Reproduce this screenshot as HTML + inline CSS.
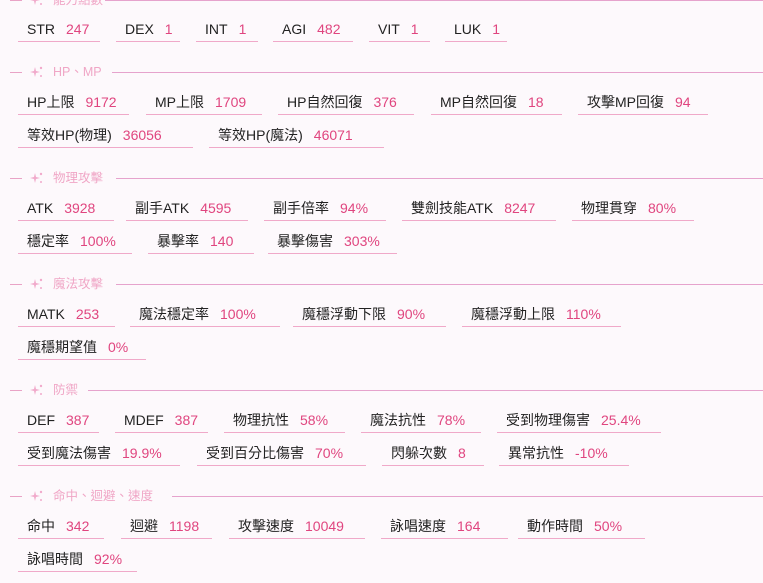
<!DOCTYPE html>
<html><head><meta charset="utf-8"><style>
html,body{margin:0;padding:0;background:#fdf9fc;width:763px;height:583px;overflow:hidden;position:relative;font-family:"Liberation Sans","Noto Sans CJK TC",sans-serif;}
.h{position:absolute;left:0;width:763px;height:16px;}
.h .d{position:absolute;left:10px;top:8px;width:12px;height:1px;background:#e9a3c6;}
.h .s{position:absolute;left:29px;top:0px;width:16px;height:16px;}
.h .t{position:absolute;left:53px;top:0;font-size:12.5px;line-height:16px;color:#f0a6c6;white-space:nowrap;}
.h .l{position:absolute;top:8px;right:0;height:1px;background:#e6a3cd;}
.i{position:absolute;height:24px;border-bottom:1px solid #f0a9c9;font-size:14px;line-height:24px;white-space:nowrap;color:#222;}
.i span.k{margin-left:9px;}
.i span.v{margin-left:11px;color:#e0457f;}
</style></head><body>
<div class="h" style="top:-8px"><div class="d"></div><svg class="s" viewBox="0 0 16 16"><path d="M6 3 L7 7 L11 8 L7 9 L6 13 L5 9 L1 8 L5 7Z" fill="#f1aacb"/><circle cx="12" cy="4" r="1.2" fill="#f1aacb"/><circle cx="12" cy="12" r="1" fill="#f1aacb"/></svg><div class="t">能力點數</div><div class="l" style="left:105px"></div></div>
<div class="h" style="top:64px"><div class="d"></div><svg class="s" viewBox="0 0 16 16"><path d="M6 3 L7 7 L11 8 L7 9 L6 13 L5 9 L1 8 L5 7Z" fill="#f1aacb"/><circle cx="12" cy="4" r="1.2" fill="#f1aacb"/><circle cx="12" cy="12" r="1" fill="#f1aacb"/></svg><div class="t">HP、MP</div><div class="l" style="left:112px"></div></div>
<div class="h" style="top:170px"><div class="d"></div><svg class="s" viewBox="0 0 16 16"><path d="M6 3 L7 7 L11 8 L7 9 L6 13 L5 9 L1 8 L5 7Z" fill="#f1aacb"/><circle cx="12" cy="4" r="1.2" fill="#f1aacb"/><circle cx="12" cy="12" r="1" fill="#f1aacb"/></svg><div class="t">物理攻擊</div><div class="l" style="left:116px"></div></div>
<div class="h" style="top:276px"><div class="d"></div><svg class="s" viewBox="0 0 16 16"><path d="M6 3 L7 7 L11 8 L7 9 L6 13 L5 9 L1 8 L5 7Z" fill="#f1aacb"/><circle cx="12" cy="4" r="1.2" fill="#f1aacb"/><circle cx="12" cy="12" r="1" fill="#f1aacb"/></svg><div class="t">魔法攻擊</div><div class="l" style="left:116px"></div></div>
<div class="h" style="top:382px"><div class="d"></div><svg class="s" viewBox="0 0 16 16"><path d="M6 3 L7 7 L11 8 L7 9 L6 13 L5 9 L1 8 L5 7Z" fill="#f1aacb"/><circle cx="12" cy="4" r="1.2" fill="#f1aacb"/><circle cx="12" cy="12" r="1" fill="#f1aacb"/></svg><div class="t">防禦</div><div class="l" style="left:88px"></div></div>
<div class="h" style="top:488px"><div class="d"></div><svg class="s" viewBox="0 0 16 16"><path d="M6 3 L7 7 L11 8 L7 9 L6 13 L5 9 L1 8 L5 7Z" fill="#f1aacb"/><circle cx="12" cy="4" r="1.2" fill="#f1aacb"/><circle cx="12" cy="12" r="1" fill="#f1aacb"/></svg><div class="t">命中、迴避、速度</div><div class="l" style="left:172px"></div></div>

<div class="i" style="top:17px;left:18px;width:82px"><span class="k">STR</span><span class="v">247</span></div>
<div class="i" style="top:17px;left:116px;width:64px"><span class="k">DEX</span><span class="v">1</span></div>
<div class="i" style="top:17px;left:196px;width:62px"><span class="k">INT</span><span class="v">1</span></div>
<div class="i" style="top:17px;left:273px;width:80px"><span class="k">AGI</span><span class="v">482</span></div>
<div class="i" style="top:17px;left:369px;width:61px"><span class="k">VIT</span><span class="v">1</span></div>
<div class="i" style="top:17px;left:445px;width:62px"><span class="k">LUK</span><span class="v">1</span></div>

<div class="i" style="top:90px;left:18px;width:111px"><span class="k">HP上限</span><span class="v">9172</span></div>
<div class="i" style="top:90px;left:146px;width:116px"><span class="k">MP上限</span><span class="v">1709</span></div>
<div class="i" style="top:90px;left:278px;width:136px"><span class="k">HP自然回復</span><span class="v">376</span></div>
<div class="i" style="top:90px;left:431px;width:131px"><span class="k">MP自然回復</span><span class="v">18</span></div>
<div class="i" style="top:90px;left:578px;width:130px"><span class="k">攻擊MP回復</span><span class="v">94</span></div>
<div class="i" style="top:123px;left:18px;width:175px"><span class="k">等效HP(物理)</span><span class="v">36056</span></div>
<div class="i" style="top:123px;left:209px;width:175px"><span class="k">等效HP(魔法)</span><span class="v">46071</span></div>

<div class="i" style="top:196px;left:18px;width:96px"><span class="k">ATK</span><span class="v">3928</span></div>
<div class="i" style="top:196px;left:126px;width:122px"><span class="k">副手ATK</span><span class="v">4595</span></div>
<div class="i" style="top:196px;left:264px;width:122px"><span class="k">副手倍率</span><span class="v">94%</span></div>
<div class="i" style="top:196px;left:402px;width:154px"><span class="k">雙劍技能ATK</span><span class="v">8247</span></div>
<div class="i" style="top:196px;left:572px;width:122px"><span class="k">物理貫穿</span><span class="v">80%</span></div>
<div class="i" style="top:229px;left:18px;width:114px"><span class="k">穩定率</span><span class="v">100%</span></div>
<div class="i" style="top:229px;left:148px;width:106px"><span class="k">暴擊率</span><span class="v">140</span></div>
<div class="i" style="top:229px;left:268px;width:129px"><span class="k">暴擊傷害</span><span class="v">303%</span></div>

<div class="i" style="top:302px;left:18px;width:97px"><span class="k">MATK</span><span class="v">253</span></div>
<div class="i" style="top:302px;left:130px;width:150px"><span class="k">魔法穩定率</span><span class="v">100%</span></div>
<div class="i" style="top:302px;left:293px;width:153px"><span class="k">魔穩浮動下限</span><span class="v">90%</span></div>
<div class="i" style="top:302px;left:462px;width:159px"><span class="k">魔穩浮動上限</span><span class="v">110%</span></div>
<div class="i" style="top:335px;left:18px;width:128px"><span class="k">魔穩期望值</span><span class="v">0%</span></div>

<div class="i" style="top:408px;left:18px;width:81px"><span class="k">DEF</span><span class="v">387</span></div>
<div class="i" style="top:408px;left:115px;width:93px"><span class="k">MDEF</span><span class="v">387</span></div>
<div class="i" style="top:408px;left:224px;width:121px"><span class="k">物理抗性</span><span class="v">58%</span></div>
<div class="i" style="top:408px;left:361px;width:120px"><span class="k">魔法抗性</span><span class="v">78%</span></div>
<div class="i" style="top:408px;left:497px;width:164px"><span class="k">受到物理傷害</span><span class="v">25.4%</span></div>
<div class="i" style="top:441px;left:18px;width:162px"><span class="k">受到魔法傷害</span><span class="v">19.9%</span></div>
<div class="i" style="top:441px;left:197px;width:169px"><span class="k">受到百分比傷害</span><span class="v">70%</span></div>
<div class="i" style="top:441px;left:382px;width:102px"><span class="k">閃躲次數</span><span class="v">8</span></div>
<div class="i" style="top:441px;left:499px;width:130px"><span class="k">異常抗性</span><span class="v">-10%</span></div>

<div class="i" style="top:514px;left:18px;width:86px"><span class="k">命中</span><span class="v">342</span></div>
<div class="i" style="top:514px;left:121px;width:91px"><span class="k">迴避</span><span class="v">1198</span></div>
<div class="i" style="top:514px;left:229px;width:136px"><span class="k">攻擊速度</span><span class="v">10049</span></div>
<div class="i" style="top:514px;left:381px;width:127px"><span class="k">詠唱速度</span><span class="v">164</span></div>
<div class="i" style="top:514px;left:518px;width:127px"><span class="k">動作時間</span><span class="v">50%</span></div>
<div class="i" style="top:547px;left:18px;width:119px"><span class="k">詠唱時間</span><span class="v">92%</span></div>
</body></html>
